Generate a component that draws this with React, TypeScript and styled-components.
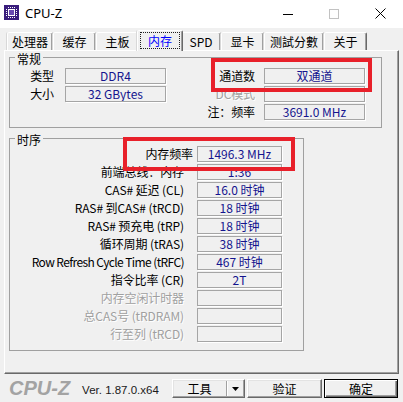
import React from "react";
import styled, { createGlobalStyle } from "styled-components";

const Global = createGlobalStyle`
  html, body { margin: 0; padding: 0; background: #f0f0f0; }
  body { font-family: "Noto Sans CJK SC", "Noto Sans", sans-serif; font-size: 12px; color: #000; }
  * { box-sizing: border-box; }
`;

const Window = styled.div`
  position: relative;
  width: 403px;
  height: 402px;
  background: #f0f0f0;
  display: flex;
  flex-direction: column;
  overflow: hidden;
`;

const TitleBar = styled.div`
  flex: none;
  height: 28px;
  background: #fff;
  display: flex;
  align-items: flex-start;
`;

const AppIcon = styled.svg`
  flex: none;
  margin: 5px 0 0 4px;
`;

const TitleText = styled.span`
  margin: 4px 0 0 6px;
  font-family: "Noto Sans", sans-serif;
  font-size: 13px;
  line-height: 18px;
`;

const Captions = styled.div`
  margin-left: auto;
  display: flex;
`;

const Caption = styled.div`
  width: 46px;
  height: 27px;
  display: flex;
  align-items: center;
  justify-content: center;
`;

const TabStrip = styled.div`
  flex: none;
  height: 22px;
  display: flex;
  align-items: flex-end;
  padding-left: 7px;
`;

const Tab = styled.div<{ $w: number; $active?: boolean }>`
  position: relative;
  z-index: ${(p) => (p.$active ? 2 : 1)};
  flex: none;
  width: ${(p) => p.$w}px;
  height: ${(p) => (p.$active ? 21 : 18)}px;
  margin: 0 ${(p) => (p.$active ? -2 : 0)}px ${(p) => (p.$active ? -1 : 0)}px;
  background: #f0f0f0;
  border-top: 1px solid #fff;
  border-left: 1px solid #fff;
  border-right: 1px solid #696969;
  box-shadow: inset -1px 0 0 #a0a0a0, -1px 0 0 #d8d8d8;
  border-radius: 2px 2px 0 0;
  display: flex;
  align-items: ${(p) => (p.$active ? "flex-start" : "center")};
  justify-content: center;
  color: ${(p) => (p.$active ? "#0000ff" : "#000")};
  font-size: 12px;
  line-height: 14px;
  white-space: nowrap;
`;

const FocusBox = styled.span`
  margin-top: 1px;
  width: 40px;
  height: 17px;
  border: 1px dotted #202020;
  display: flex;
  align-items: center;
  justify-content: center;
`;

const Panel = styled.div`
  flex: none;
  height: 324px;
  margin: 0 4px;
  border-top: 1px solid #fff;
  border-left: 1px solid #fff;
  border-right: 1px solid #696969;
  border-bottom: 1px solid #696969;
  box-shadow: inset -1px -1px 0 #a0a0a0;
  padding: 0 4px;
  display: flex;
  flex-direction: column;
  gap: 4px;
`;

const Group = styled.fieldset<{ $w: number }>`
  margin: 0;
  padding: 0;
  min-inline-size: 0;
  width: ${(p) => p.$w}px;
  border: 1px solid #a0a0a0;
`;

const Legend = styled.legend`
  margin-left: 5px;
  padding: 0 2px;
  height: 12px;
  font-size: 12px;
  line-height: 15px;
`;

const GeneralGrid = styled.div`
  display: grid;
  grid-template-columns: 55px 101px 98px 101px;
  grid-auto-rows: 16px;
  row-gap: 2px;
  padding: 5px 15px 7px 0;
`;

const TimingGrid = styled.div`
  display: grid;
  grid-template-columns: 187px 85px;
  grid-auto-rows: 16px;
  row-gap: 2px;
  padding: 2px 0 8px 0;
`;

const Label = styled.span<{ $pr: number; $disabled?: boolean; $tight?: boolean }>`
  text-align: right;
  padding-right: ${(p) => p.$pr}px;
  font-size: 12px;
  line-height: 16px;
  white-space: nowrap;
  letter-spacing: ${(p) => (p.$tight ? "-0.6px" : "-0.1px")};
  color: ${(p) => (p.$disabled ? "#a0a0a0" : "#000")};
  text-shadow: ${(p) => (p.$disabled ? "1px 1px 0 #fff" : "none")};
`;

const Field = styled.div`
  height: 16px;
  border: 1px solid #a5a5a5;
  box-shadow: 1px 1px 0 #fff;
  background: #f0f0f0;
  text-align: center;
  font-size: 12px;
  line-height: 14px;
  color: #14148e;
  white-space: nowrap;
  overflow: hidden;
`;

const Highlight = styled.div<{ $x: number; $y: number; $w: number; $h: number }>`
  position: absolute;
  left: ${(p) => p.$x}px;
  top: ${(p) => p.$y}px;
  width: ${(p) => p.$w}px;
  height: ${(p) => p.$h}px;
  border: 4px solid #e8202a;
  pointer-events: none;
  z-index: 5;
`;

const BottomBar = styled.div`
  flex: 1;
  display: flex;
  align-items: flex-start;
  padding: 5px 5px 0 9px;
`;

const Logo = styled.div`
  font-family: "Liberation Sans", Arial, sans-serif;
  font-weight: bold;
  font-style: italic;
  font-size: 20px;
  line-height: 19px;
  color: #a3a3a3;
`;

const Version = styled.div`
  margin-left: 12px;
  padding-top: 2px;
  font-family: "Liberation Sans", Arial, sans-serif;
  font-size: 11.5px;
  line-height: 19px;
  color: #1a1a1a;
`;

const Buttons = styled.div`
  margin-left: auto;
  display: flex;
  gap: 2px;
`;

const Button = styled.div<{ $w: number; $default?: boolean }>`
  width: ${(p) => p.$w}px;
  height: 19px;
  background: #f0f0f0;
  border: 1px solid;
  border-color: ${(p) => (p.$default ? "#000" : "#fff #696969 #696969 #fff")};
  box-shadow: ${(p) =>
    p.$default
      ? "inset 1px 1px 0 #fff, inset -1px -1px 0 #696969, inset -2px -2px 0 #a0a0a0"
      : "inset -1px -1px 0 #a0a0a0, inset 1px 1px 0 #e3e3e3"};
  display: flex;
  align-items: center;
  justify-content: center;
  font-size: 12px;
  line-height: 16px;
`;

const SplitButton = styled.div`
  width: 73px;
  height: 19px;
  display: flex;
  background: #f0f0f0;
  border: 1px solid;
  border-color: #fff #696969 #696969 #fff;
  box-shadow: inset -1px -1px 0 #a0a0a0, inset 1px 1px 0 #e3e3e3;
`;

const SplitMain = styled.span`
  flex: 1;
  display: flex;
  align-items: center;
  justify-content: center;
  font-size: 12px;
  line-height: 16px;
`;

const SplitArrow = styled.span`
  width: 17px;
  margin: 1px 1px 1px 0;
  border-left: 1px solid #a0a0a0;
  box-shadow: inset 1px 0 0 #fff;
  display: flex;
  align-items: center;
  justify-content: center;
`;

const tabs = [
  { t: "处理器", w: 46 },
  { t: "缓存", w: 43 },
  { t: "主板", w: 43 },
  { t: "内存", w: 46, active: true },
  { t: "SPD", w: 40 },
  { t: "显卡", w: 43 },
  { t: "测試分數", w: 60 },
  { t: "关于", w: 43 },
];

const timings: { label: string; value: string; pr?: number; disabled?: boolean; tight?: boolean }[] = [
  { label: "内存频率", value: "1496.3 MHz", pr: 4 },
  { label: "前端总线：内存", value: "1:36" },
  { label: "CAS# 延迟 (CL)", value: "16.0 时钟" },
  { label: "RAS# 到CAS# (tRCD)", value: "18 时钟" },
  { label: "RAS# 预充电 (tRP)", value: "18 时钟" },
  { label: "循环周期 (tRAS)", value: "38 时钟" },
  { label: "Row Refresh Cycle Time (tRFC)", value: "467 时钟", tight: true },
  { label: "指令比率 (CR)", value: "2T" },
  { label: "内存空闲计时器", value: "", disabled: true },
  { label: "总CAS号 (tRDRAM)", value: "", disabled: true },
  { label: "行至列 (tRCD)", value: "", disabled: true },
];

const pins = [4, 6, 8, 10];

export default function App() {
  return (
    <>
      <Global />
      <Window>
        <TitleBar>
          <AppIcon width="15" height="15" viewBox="0 0 15 15">
            <rect width="15" height="15" fill="#3a1d7c" />
            <rect x="4.5" y="4.5" width="6" height="6" fill="#6a4bb0" stroke="#fff" />
            {pins.map((p) => (
              <g key={p} fill="#fff">
                <rect x={p} y={2} width="1" height="1" />
                <rect x={p} y={12} width="1" height="1" />
                <rect x={2} y={p} width="1" height="1" />
                <rect x={12} y={p} width="1" height="1" />
              </g>
            ))}
          </AppIcon>
          <TitleText>CPU-Z</TitleText>
          <Captions>
            <Caption>
              <svg width="10" height="10" viewBox="0 0 10 10">
                <path d="M0 5.5H10" stroke="#000" strokeWidth="1" />
              </svg>
            </Caption>
            <Caption>
              <svg width="10" height="10" viewBox="0 0 10 10">
                <rect x="0.5" y="0.5" width="9" height="9" fill="none" stroke="#c2c2c2" />
              </svg>
            </Caption>
            <Caption>
              <svg width="11" height="11" viewBox="0 0 11 11">
                <path d="M0.5 0.5L10.5 10.5M10.5 0.5L0.5 10.5" stroke="#000" strokeWidth="1" />
              </svg>
            </Caption>
          </Captions>
        </TitleBar>

        <TabStrip>
          {tabs.map((t) => (
            <Tab key={t.t} $w={t.w} $active={t.active}>
              {t.active ? <FocusBox>{t.t}</FocusBox> : t.t}
            </Tab>
          ))}
        </TabStrip>

        <Panel>
          <Group $w={373}>
            <Legend>常规</Legend>
            <GeneralGrid>
              <Label $pr={11}>类型</Label>
              <Field>DDR4</Field>
              <Label $pr={9}>通道数</Label>
              <Field>双通道</Field>

              <Label $pr={11}>大小</Label>
              <Field>32 GBytes</Field>
              <Label $pr={9} $disabled>
                DC模式
              </Label>
              <Field />

              <span />
              <span />
              <Label $pr={9}>注：频率</Label>
              <Field>3691.0 MHz</Field>
            </GeneralGrid>
          </Group>

          <Group $w={295}>
            <Legend>时序</Legend>
            <TimingGrid>
              {timings.map((r) => (
                <React.Fragment key={r.label}>
                  <Label $pr={r.pr ?? 13} $disabled={r.disabled} $tight={r.tight}>
                    {r.label}
                  </Label>
                  <Field>{r.value}</Field>
                </React.Fragment>
              ))}
            </TimingGrid>
          </Group>
        </Panel>

        <BottomBar>
          <Logo>CPU-Z</Logo>
          <Version>Ver. 1.87.0.x64</Version>
          <Buttons>
            <SplitButton>
              <SplitMain>工具</SplitMain>
              <SplitArrow>
                <svg width="7" height="4" viewBox="0 0 7 4">
                  <path d="M0 0H7L3.5 4Z" fill="#000" />
                </svg>
              </SplitArrow>
            </SplitButton>
            <Button $w={75}>验证</Button>
            <Button $w={74} $default>
              确定
            </Button>
          </Buttons>
        </BottomBar>

        <Highlight $x={211} $y={58} $w={161} $h={34} />
        <Highlight $x={123} $y={137} $w={172} $h={34} />
      </Window>
    </>
  );
}
